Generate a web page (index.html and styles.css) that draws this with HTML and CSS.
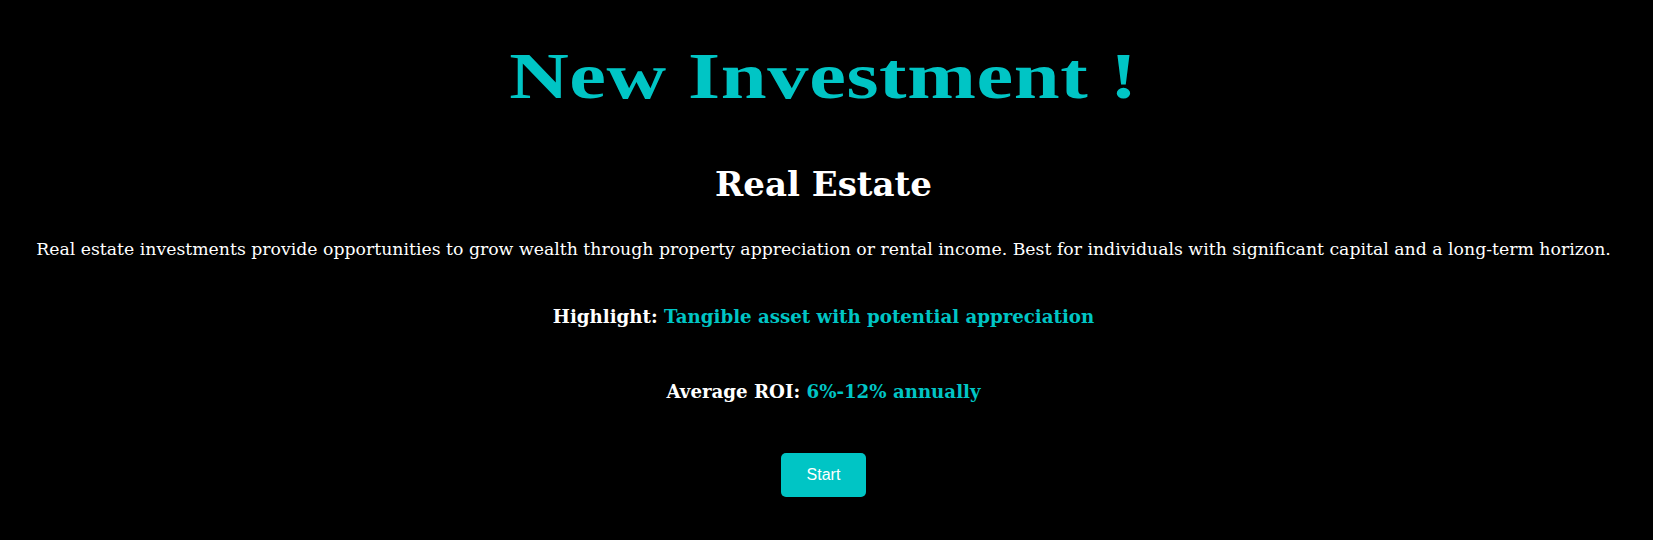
FILE: index.html
```html
<!DOCTYPE html>
<html>
<head>
<meta charset="utf-8">
<link rel="stylesheet" href="styles.css">
</head>
<body>
<main class="page">
  <h1 class="title">New Investment !</h1>
  <h2 class="subtitle">Real Estate</h2>
  <p class="desc">Real estate investments provide opportunities to grow wealth through property appreciation or rental income. Best for individuals with significant capital and a long-term horizon.</p>
  <p class="stat">Highlight: <span class="accent">Tangible asset with potential appreciation</span></p>
  <p class="stat">Average ROI: <span class="accent">6%-12% annually</span></p>
  <button class="start">Start</button>
</main>
</body>
</html>
```

FILE: styles.css
```css
html, body {
  margin: 0;
  padding: 0;
  background: #000;
  height: 100%;
}
.page {
  display: flex;
  flex-direction: column;
  align-items: center;
  text-align: center;
  padding-right: 6px;
  color: #fff;
  font-family: "DejaVu Serif", Georgia, serif;
}
.title {
  margin: 38px 0 0;
  font-family: "Liberation Serif", "Times New Roman", serif;
  font-size: 66px;
  line-height: 76px;
  letter-spacing: 0.5px;
  font-weight: bold;
  color: #00c5c5;
  transform: scaleX(1.25);
}
.subtitle {
  margin: 50px 0 0;
  font-size: 34px;
  line-height: 40px;
  font-weight: bold;
}
.desc {
  margin: 33px 0 0;
  font-size: 17.3px;
  line-height: 24px;
}
.stat {
  margin: 43px 0 0;
  font-size: 18.2px;
  line-height: 26px;
  font-weight: bold;
}
.stat + .stat {
  margin-top: 49px;
}
.accent {
  color: #00c5c5;
}
.start {
  margin-top: 48px;
  width: 85px;
  height: 44px;
  border: none;
  border-radius: 5px;
  background: #00c5c5;
  color: #fff;
  font-family: "Liberation Sans", Arial, sans-serif;
  font-size: 16px;
  cursor: pointer;
}
```
